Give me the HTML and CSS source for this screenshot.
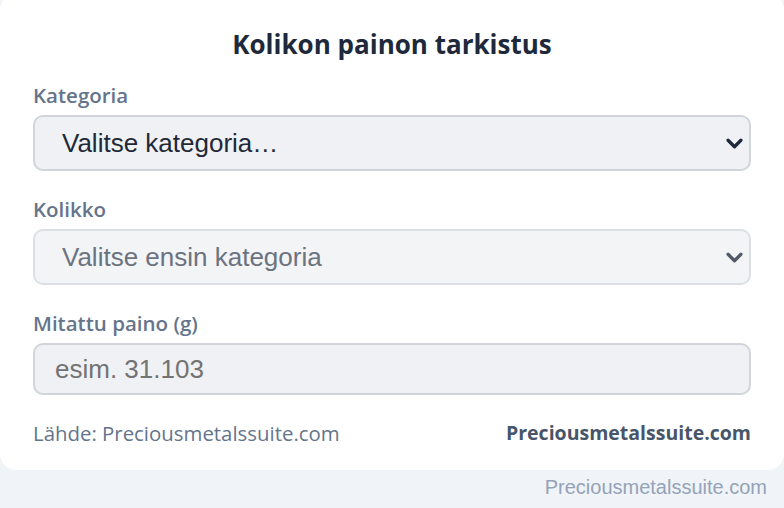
FILE: index.html
```html
<!DOCTYPE html>
<html lang="fi">
<head>
    <meta charset="UTF-8">
    <meta name="viewport" content="width=device-width, initial-scale=1.0">
    <title>Kolikon painon tarkistus</title>
    <link rel="stylesheet" href="styles.css">
</head>
<body>
    <div class="card">
        <h1>Kolikon painon tarkistus</h1>

        <label class="field-label" for="category">Kategoria</label>
        <select id="category" class="field select">
            <option>Valitse kategoria…</option>
        </select>

        <label class="field-label" for="coin">Kolikko</label>
        <select id="coin" class="field select muted" disabled>
            <option>Valitse ensin kategoria</option>
        </select>

        <label class="field-label" for="weight">Mitattu paino (g)</label>
        <input type="text" id="weight" class="field input" placeholder="esim. 31.103">

        <div class="card-footer">
            <span class="source">Lähde: Preciousmetalssuite.com</span>
            <span class="brand">Preciousmetalssuite.com</span>
        </div>
    </div>

    <div class="credit">Preciousmetalssuite.com</div>
</body>
</html>
```

FILE: styles.css
```css
body {
    margin: 0;
    background-color: #f0f3f7;
    font-family: "Open Sans", "Noto Sans", sans-serif;
}
.card {
    background: #fff;
    border-radius: 16px;
    margin-top: -6px;
    padding: 34px 33px 25px;
    display: flex;
    flex-direction: column;
}
h1 {
    margin: 0 0 23px;
    font-size: 26px;
    line-height: 32px;
    font-weight: 700;
    text-align: center;
    color: #1e293b;
}
.field-label {
    font-size: 20.5px;
    line-height: 24px;
    font-weight: 600;
    color: #64748b;
    margin-bottom: 8px;
}
.field {
    box-sizing: border-box;
    width: 100%;
    border: 2px solid #d1d5db;
    border-radius: 10px;
    background-color: #eff1f4;
    font-family: "Liberation Sans", Arial, sans-serif;
    font-size: 26px;
    color: #1f2937;
    margin: 0 0 26px;
}
.select {
    height: 56px;
    padding: 0 48px 0 27px;
    appearance: none;
    -webkit-appearance: none;
    background-image: url("data:image/svg+xml,%3Csvg xmlns='http://www.w3.org/2000/svg' width='18' height='12' viewBox='0 0 18 12'%3E%3Cpath d='M2 2.5l7 7 7-7' fill='none' stroke='%231e293b' stroke-width='3.6' stroke-linecap='round' stroke-linejoin='round'/%3E%3C/svg%3E");
    background-repeat: no-repeat;
    background-position: right 6px center;
    background-size: 17px 11px;
}
.select.muted {
    background-color: #f3f4f6;
    border-color: #dcdfe4;
    color: #6b7280;
    opacity: 1;
    background-image: url("data:image/svg+xml,%3Csvg xmlns='http://www.w3.org/2000/svg' width='18' height='12' viewBox='0 0 18 12'%3E%3Cpath d='M2 2.5l7 7 7-7' fill='none' stroke='%23525b69' stroke-width='3.6' stroke-linecap='round' stroke-linejoin='round'/%3E%3C/svg%3E");
}
.input {
    height: 52px;
    padding: 0 20px;
}
.input::placeholder {
    color: #737373;
}
.card-footer {
    display: flex;
    justify-content: space-between;
    font-size: 20.4px;
    line-height: 24px;
}
.source {
    color: #64748b;
}
.brand {
    color: #475569;
    font-weight: 700;
    font-size: 19.5px;
}
.credit {
    text-align: right;
    padding: 7px 17px 0;
    font-family: "Liberation Sans", Arial, sans-serif;
    font-size: 20px;
    line-height: 20px;
    color: #94a3b8;
}
```
